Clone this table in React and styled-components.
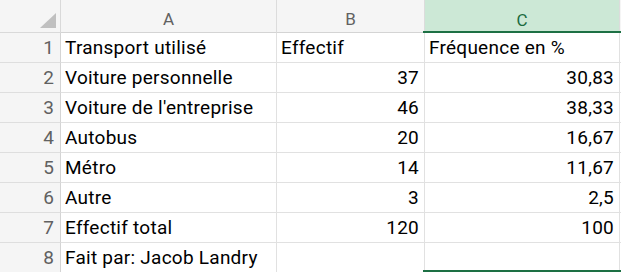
import React from "react";
import styled, { createGlobalStyle, css } from "styled-components";

const Global = createGlobalStyle`
  html, body { margin: 0; padding: 0; background: #ffffff; }
  body { font-family: Roboto, "Liberation Sans", sans-serif; }
`;

const Sheet = styled.div`
  display: grid;
  grid-template-columns: 61px 216px 148px 195px 1fr;
  grid-template-rows: 33px repeat(8, 30px);
  width: 621px;
  height: 272px;
  overflow: hidden;
`;

const Corner = styled.div`
  position: relative;
  background: #f5f5f5;
  border-right: 1px solid #d9d9d9;
  border-bottom: 1px solid #d9d9d9;
  box-sizing: border-box;
  &::after {
    content: "";
    position: absolute;
    right: 4px;
    bottom: 4px;
    width: 0;
    height: 0;
    border-left: 16px solid transparent;
    border-bottom: 15px solid #c0c0c0;
  }
`;

const ColHead = styled.div`
  position: relative;
  box-sizing: border-box;
  display: flex;
  align-items: flex-end;
  justify-content: center;
  padding-bottom: 3px;
  font-size: 17px;
  color: #616161;
  background: #f5f5f5;
  border-right: 1px solid #dcdcdc;
  border-bottom: 1px solid #d4d4d4;
  ${(p) =>
    p.$selected &&
    css`
      background: #cce8d6;
      color: #1b6b3f;
      border-bottom: none;
      &::after {
        content: "";
        position: absolute;
        left: -2px;
        right: -3px;
        bottom: 0;
        height: 2px;
        background: #1d7044;
      }
    `}
`;

const Filler = styled.div`
  background: ${(p) => (p.$head ? "#f5f5f5" : "#ffffff")};
  border-bottom: 1px solid ${(p) => (p.$head ? "#d4d4d4" : "#e1e1e1")};
  box-sizing: border-box;
`;

const RowHead = styled.div`
  box-sizing: border-box;
  display: flex;
  align-items: flex-end;
  justify-content: flex-end;
  padding: 0 6px 3px 0;
  font-size: 19px;
  line-height: 22px;
  color: #616161;
  background: #f5f5f5;
  border-right: 1px solid #d4d4d4;
  border-bottom: 1px solid #dedede;
`;

const Cell = styled.div`
  position: relative;
  box-sizing: border-box;
  display: flex;
  align-items: flex-end;
  justify-content: ${(p) => (p.$num ? "flex-end" : "flex-start")};
  padding: 0 5px 3px 4px;
  font-size: 19px;
  letter-spacing: 0.25px;
  line-height: 22px;
  color: #000000;
  white-space: nowrap;
  border-right: 1px solid #e1e1e1;
  border-bottom: 1px solid #e1e1e1;
`;

const SelEdge = styled.span`
  position: absolute;
  left: -2px;
  right: -3px;
  bottom: 0;
  height: 2px;
  background: #1d7044;
`;

const rows = [
  ["Transport utilisé", "Effectif", "Fréquence en %", false],
  ["Voiture personnelle", "37", "30,83", true],
  ["Voiture de l'entreprise", "46", "38,33", true],
  ["Autobus", "20", "16,67", true],
  ["Métro", "14", "11,67", true],
  ["Autre", "3", "2,5", true],
  ["Effectif total", "120", "100", true],
  ["Fait par: Jacob Landry", "", "", true],
];

export default function App() {
  return (
    <>
      <Global />
      <Sheet>
        <Corner />
        <ColHead>A</ColHead>
        <ColHead>B</ColHead>
        <ColHead $selected>C</ColHead>
        <Filler $head />
        {rows.map(([a, b, c, num], i) => (
          <React.Fragment key={i}>
            <RowHead>{i + 1}</RowHead>
            <Cell>{a}</Cell>
            <Cell $num={num}>{b}</Cell>
            <Cell $num={num}>
              {c}
              {i === rows.length - 1 && <SelEdge />}
            </Cell>
            <Filler />
          </React.Fragment>
        ))}
      </Sheet>
    </>
  );
}
